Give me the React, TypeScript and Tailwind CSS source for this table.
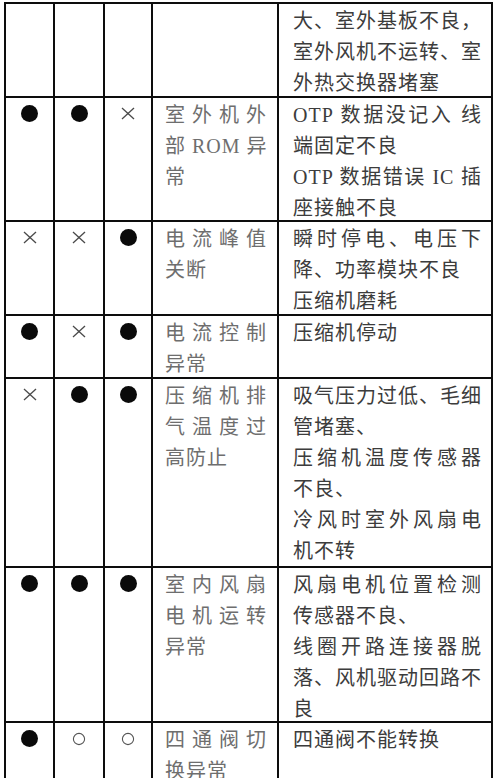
import React from "react";

type Mark = "dot" | "x" | "o";

const FONT = { fontFamily: "'Liberation Serif', 'Noto Sans CJK SC', serif" };

function MarkIcon({ m }: { m: Mark }) {
  if (m === "dot") return <div className="w-[17px] h-[17px] rounded-full bg-[#0a0a0a]" />;
  if (m === "x")
    return (
      <svg width="14" height="13" viewBox="0 0 14 13">
        <line x1="1" y1="1" x2="13" y2="12" stroke="#4a4a4a" strokeWidth="1.3" />
        <line x1="13" y1="1" x2="1" y2="12" stroke="#4a4a4a" strokeWidth="1.3" />
      </svg>
    );
  return (
    <svg width="14" height="14" viewBox="0 0 14 14">
      <circle cx="7" cy="7" r="5.6" fill="none" stroke="#555" strokeWidth="1.1" />
    </svg>
  );
}

type L = [string, boolean];

type Row = { marks: (Mark | null)[]; name: L[]; desc: L[] };

const rows: Row[] = [
  {
    marks: [null, null, null],
    name: [],
    desc: [
      ["大、室外基板不良，", true],
      ["室外风机不运转、室", true],
      ["外热交换器堵塞", false],
    ],
  },
  {
    marks: ["dot", "dot", "x"],
    name: [
      ["室外机外", true],
      ["部 ROM 异", true],
      ["常", false],
    ],
    desc: [
      ["OTP 数据没记入 线", true],
      ["端固定不良", false],
      ["OTP 数据错误 IC 插", true],
      ["座接触不良", false],
    ],
  },
  {
    marks: ["x", "x", "dot"],
    name: [
      ["电流峰值", true],
      ["关断", false],
    ],
    desc: [
      ["瞬时停电、电压下", true],
      ["降、功率模块不良", false],
      ["压缩机磨耗", false],
    ],
  },
  {
    marks: ["dot", "x", "dot"],
    name: [
      ["电流控制", true],
      ["异常", false],
    ],
    desc: [["压缩机停动", false]],
  },
  {
    marks: ["x", "dot", "dot"],
    name: [
      ["压缩机排", true],
      ["气温度过", true],
      ["高防止", false],
    ],
    desc: [
      ["吸气压力过低、毛细", true],
      ["管堵塞、", false],
      ["压缩机温度传感器", true],
      ["不良、", false],
      ["冷风时室外风扇电", true],
      ["机不转", false],
    ],
  },
  {
    marks: ["dot", "dot", "dot"],
    name: [
      ["室内风扇", true],
      ["电机运转", true],
      ["异常", false],
    ],
    desc: [
      ["风扇电机位置检测", true],
      ["传感器不良、", false],
      ["线圈开路连接器脱", true],
      ["落、风机驱动回路不", true],
      ["良", false],
    ],
  },
  {
    marks: ["dot", "o", "o"],
    name: [
      ["四通阀切", true],
      ["换异常", false],
    ],
    desc: [["四通阀不能转换", false]],
  },
];

function Lines({ lines }: { lines: L[] }) {
  return (
    <>
      {lines.map(([t, j], i) => (
        <div
          key={i}
          className={
            "whitespace-nowrap leading-[31px] h-[31px] " +
            (j ? "text-justify [text-align-last:justify] [text-justify:inter-character]" : "text-left")
          }
        >
          {t}
        </div>
      ))}
    </>
  );
}

export default function App() {
  return (
    <div className="w-[500px] h-[778px] overflow-hidden bg-white" style={FONT}>
      <div className="ml-[4px] mt-[2px] w-max grid grid-cols-[49px_50px_48px_126px_214px] grid-rows-[94px_124px_94px_63px_189px_155px_80px] border-l-2 border-t-2 border-[#0d0d0d] text-[20px] tracking-[1px]">
        {rows.map((r, ri) => (
          <React.Fragment key={ri}>
            {r.marks.map((m, mi) => (
              <div key={mi} className="border-r-2 border-b-2 border-[#0d0d0d] flex justify-center items-start pt-[7px]">
                <div className="w-[17px] h-[17px] flex items-center justify-center">{m && <MarkIcon m={m} />}</div>
              </div>
            ))}
            <div className="border-r-2 border-b-2 border-[#0d0d0d] pl-[12px] pr-[10px] pt-[2px] text-[#6e6e6e]">
              <Lines lines={r.name} />
            </div>
            <div className="border-r-2 border-b-2 border-[#0d0d0d] pl-[14px] pr-[9px] pt-[2px] text-[#3c3c3c]">
              <Lines lines={r.desc} />
            </div>
          </React.Fragment>
        ))}
      </div>
    </div>
  );
}
